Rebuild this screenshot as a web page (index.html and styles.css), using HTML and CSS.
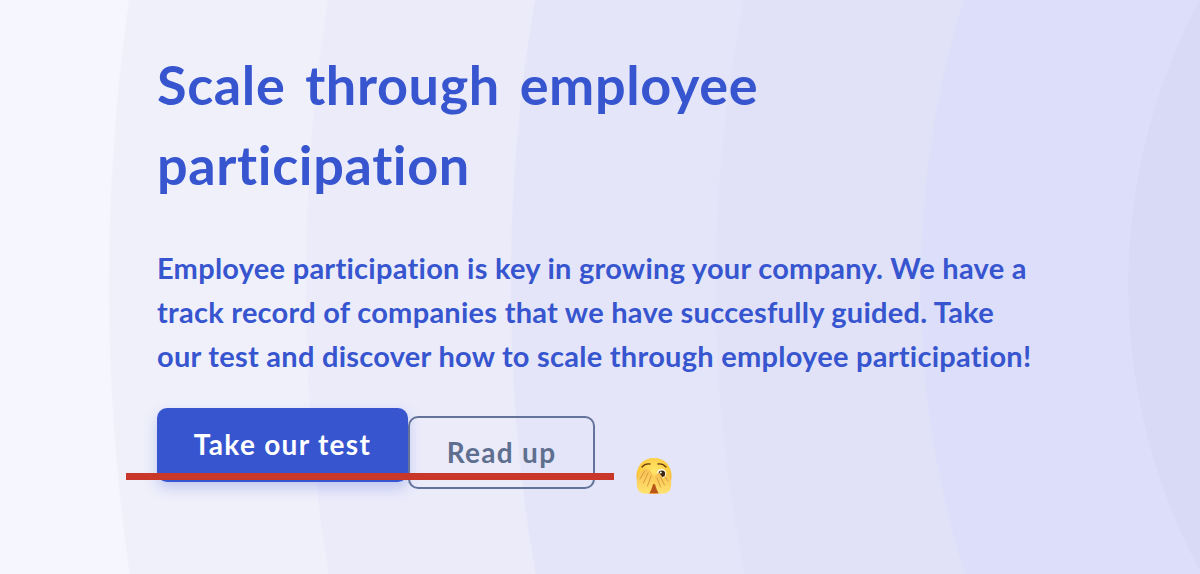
FILE: index.html
```html
<!DOCTYPE html>
<html lang="en">
<head>
    <meta charset="UTF-8">
    <meta name="viewport" content="width=device-width, initial-scale=1.0">
    <title>Scale through employee participation</title>
    <link rel="stylesheet" href="styles.css">
</head>
<body>
    <section class="hero">
        <h1>Scale through employee<br>participation</h1>
        <p class="intro">
            <span>Employee participation is key in growing your company. We have a</span>
            <span>track record of companies that we have succesfully guided. Take</span>
            <span>our test and discover how to scale through employee participation!</span>
        </p>
        <div class="actions">
            <a class="btn btn-primary" href="#">Take our test</a>
            <a class="btn btn-outline" href="#">Read up</a>
            <div class="strike"></div>
            <svg class="peek" viewBox="0 0 38 38" aria-hidden="true">
                <defs>
                    <radialGradient id="face" cx="50%" cy="35%" r="65%">
                        <stop offset="0" stop-color="#ffe66b"/>
                        <stop offset="0.7" stop-color="#fdc93c"/>
                        <stop offset="1" stop-color="#ee9a1e"/>
                    </radialGradient>
                    <linearGradient id="hand" x1="0" y1="0" x2="0" y2="1">
                        <stop offset="0" stop-color="#f8c052"/>
                        <stop offset="1" stop-color="#ffe36e"/>
                    </linearGradient>
                </defs>
                <path d="M19 1C30 1 36.500 9 36.500 19C36.500 30 30 37 19 37C8 37 1.500 30 1.500 19C1.500 9 8 1 19 1Z" fill="url(#face)"/>
                <path d="M7 10C9 7.500 12 6.500 15 7" fill="none" stroke="#6b3d12" stroke-width="1.300" stroke-linecap="round"/>
                <path d="M23 7C26 6.500 29 7.500 31 10" fill="none" stroke="#6b3d12" stroke-width="1.300" stroke-linecap="round"/>
                <circle cx="26.500" cy="16.500" r="4.800" fill="#fff6dc"/>
                <circle cx="26.800" cy="16.800" r="3.300" fill="#3b2412"/>
                <circle cx="25.800" cy="15.600" r="1" fill="#fff"/>
                <path d="M19 27C21.500 27 23.500 32 23.500 36L14.500 36C14.500 32 16.500 27 19 27Z" fill="#b8561c"/>
                <path d="M2 23C3 17 7 12.500 11 12C14 12 18 16 19 21C18.500 26 17 32 14.500 36C11 37.500 5 36.500 3 33C1.800 30 1.500 26 2 23Z" fill="url(#hand)"/>
                <path d="M5 22L9.500 14.500M8.500 26L13 16M12.500 29L16 19" fill="none" stroke="#d08a35" stroke-width="0.800" stroke-linecap="round"/>
                <path d="M36 23C35.500 20.500 34.500 18 33 16L29.500 23L24 15.500C21 17 19.500 19 19 21C19.500 26 21 32 23.500 36C27 37.500 33 36.500 35 33C36.200 30 36.500 26 36 23Z" fill="url(#hand)"/>
                <path d="M33 24L30 20M29.500 28L25.500 20M25.500 30L22 21" fill="none" stroke="#d08a35" stroke-width="0.800" stroke-linecap="round"/>
            </svg>
        </div>
    </section>
</body>
</html>
```
FILE: styles.css
```css
html, body {
    height: 100%;
}
body {
    margin: 0;
    overflow: hidden;
    font-family: Lato, "Noto Sans", Arial, sans-serif;
    color: #3655cf;
    background-color: #f6f6fe;
    background-image:
        radial-gradient(circle 607px at 1735px 285px, #d9daf5 99.9%, transparent 100%),
        radial-gradient(circle 966px at 1886px 285px, #dddef9 99.9%, transparent 100%),
        radial-gradient(circle 1464px at 2179px 285px, #e1e2f7 99.9%, transparent 100%),
        radial-gradient(circle 1704px at 2214px 285px, #e4e5f8 99.9%, transparent 100%),
        radial-gradient(circle 1857px at 2162px 285px, #ebebfa 99.9%, transparent 100%),
        radial-gradient(circle 2040px at 2148px 285px, #f0f0fb 99.9%, transparent 100%);
}
.hero {
    padding: 45px 0 0 157px;
}
h1 {
    margin: 0 0 41px;
    font-size: 54px;
    font-weight: 700;
    line-height: 80px;
    letter-spacing: 0.63px;
    word-spacing: 6px;
}
.intro {
    margin: 0 0 30px;
    font-size: 29px;
    font-weight: 700;
    line-height: 44px;
    letter-spacing: 0.26px;
}
.intro span {
    display: block;
    white-space: nowrap;
}
.actions {
    position: relative;
    display: flex;
    align-items: flex-start;
}
.btn {
    display: block;
    box-sizing: border-box;
    text-align: center;
    text-decoration: none;
    font-size: 28px;
    font-weight: 700;
    letter-spacing: 1.3px;
    border-radius: 10px;
}
.btn-primary {
    width: 251px;
    height: 74px;
    line-height: 72px;
    color: #fff;
    background: #3655cf;
    box-shadow: 0 6px 14px rgba(54, 85, 207, 0.25);
}
.btn-outline {
    width: 187px;
    height: 73px;
    margin-top: 8px;
    line-height: 68px;
    color: #5f6f8f;
    border: 2px solid #63739a;
}
.strike {
    position: absolute;
    left: -31px;
    top: 65px;
    width: 488px;
    height: 7px;
    background: #c8372a;
}
.peek {
    position: absolute;
    left: 478px;
    top: 49px;
    width: 38px;
    height: 38px;
}
```
